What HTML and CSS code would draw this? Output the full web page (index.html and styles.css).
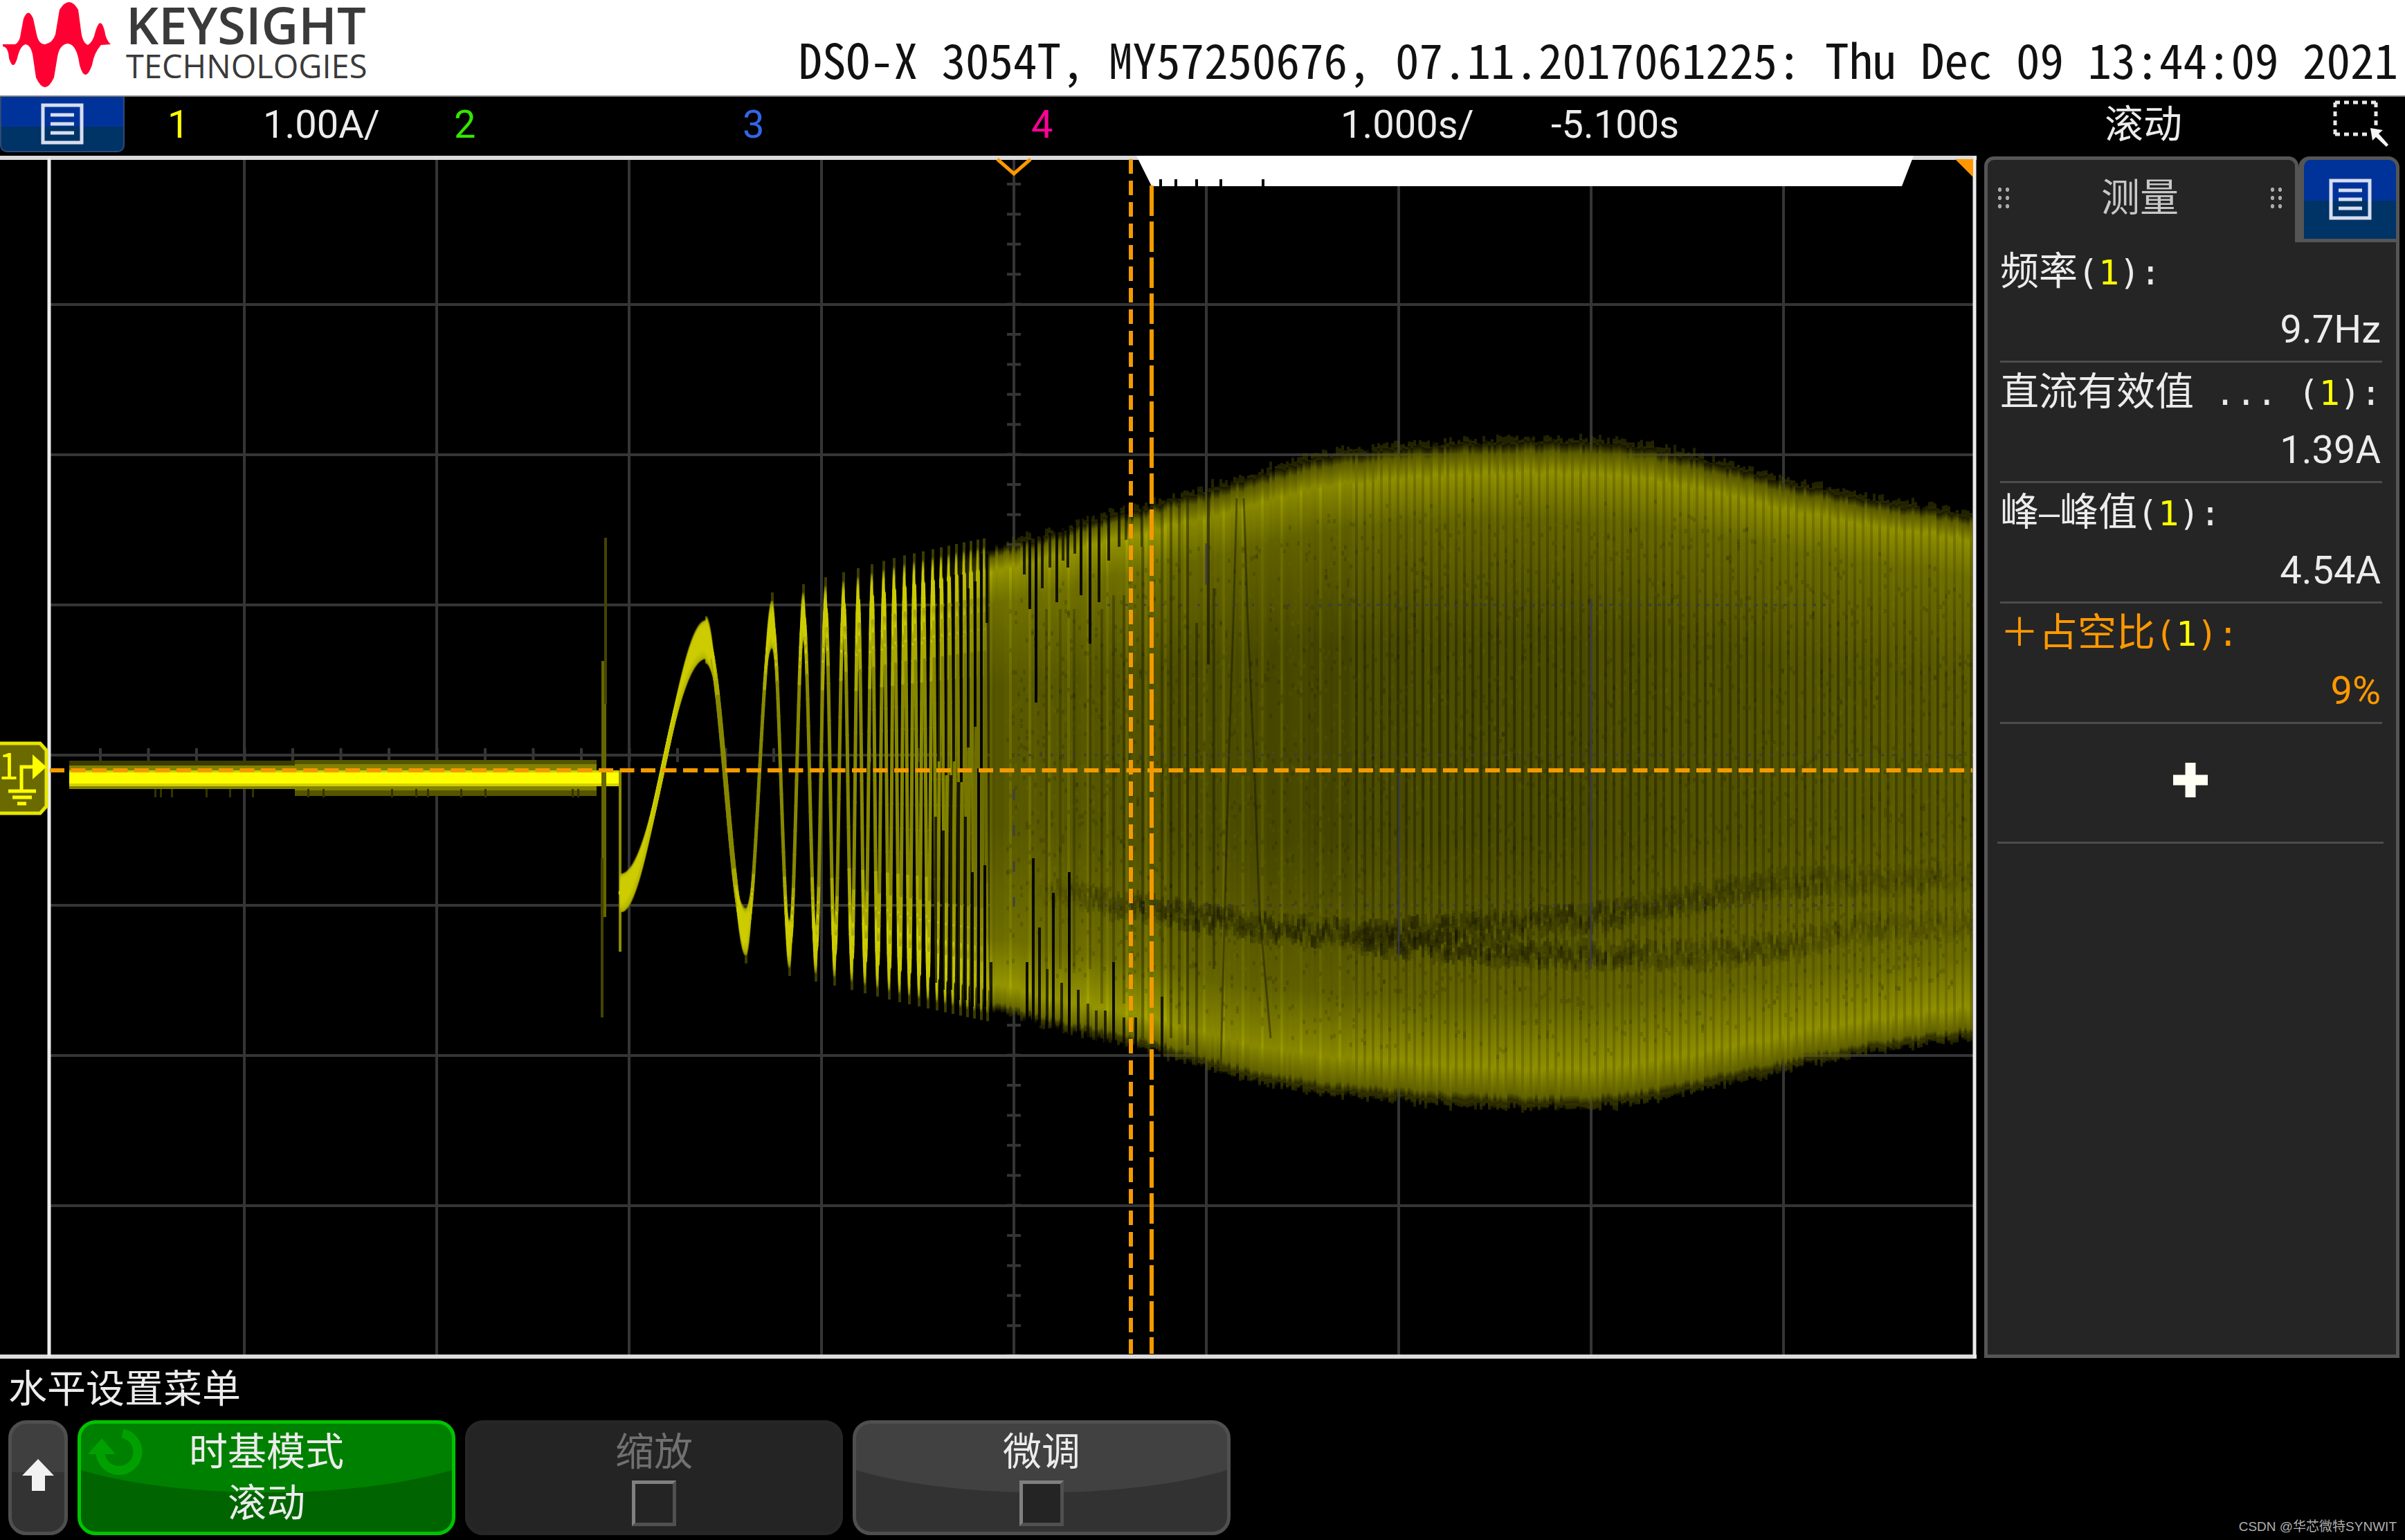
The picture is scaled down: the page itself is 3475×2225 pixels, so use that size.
FILE: index.html
```html
<!DOCTYPE html>
<html lang="zh-CN">
<head>
<meta charset="utf-8">
<title>DSO-X 3054T</title>
<link rel="stylesheet" href="styles.css">
</head>
<body>
<header class="masthead">
  <div class="brand">
    <svg class="brand-mark" viewBox="0 0 164 130" aria-hidden="true">
      <path fill="#ff0032" d="M4 64 L22 64 Q29 60 30 48 L34 27 Q41 10 48 27 L53 50 Q56 64 65 64 Q76 62 80 50 L86 14 Q100 -8 113 14 L117 44 Q119 62 127 65 Q135 60 138 45 Q145 22 151 44 Q153 58 160 64 L146 65 Q136 76 133 94 Q123 122 115 94 Q111 64 98 63 Q86 64 83 82 L78 112 Q65 140 52 112 L47 78 Q44 65 37 64 Q29 66 25 84 Q19 104 13 84 Q12 68 4 67 Z"/>
    </svg>
    <div class="brand-text">
      <span class="brand-name">KEYSIGHT</span>
      <span class="brand-sub">TECHNOLOGIES</span>
    </div>
  </div>
  <p class="device-info">DSO-X 3054T, MY57250676, 07.11.2017061225: Thu Dec 09 13:44:09 2021</p>
</header>

<section class="status">
  <button class="menu-button" type="button" aria-label="菜单">
    <svg class="menu-icon" viewBox="0 0 62 60"><rect x="3" y="3" width="56" height="54"/><path d="M14 17H48M14 30H48M14 43H48"/></svg>
  </button>
  <div class="channel ch1"><span class="channel-no">1</span><span class="reading">1.00A/</span></div>
  <div class="channel ch2">2</div>
  <div class="channel ch3">3</div>
  <div class="channel ch4">4</div>
  <div class="reading">1.000s/</div>
  <div class="reading">-5.100s</div>
  <div class="mode">滚动</div>
  <button class="select-button" type="button" aria-label="框选">
    <svg class="select-icon" viewBox="0 0 80 70"><path d="M3 3H64M3 49H52M3 3V49M62 3V38" fill="none" stroke="#e8e8e8" stroke-width="5" stroke-dasharray="7 6"/><path d="M54 40L72 43L66 48L80 64L77 67L62 53L57 58Z" fill="#f4f4f4"/></svg>
  </button>
</section>

<main class="workspace">
  <section class="scope" aria-label="波形">
    <svg class="layer" viewBox="0 224 2856 1740">
      <g stroke="#353535" stroke-width="4">
        <path d="M353 228V1960M631 228V1960M909 228V1960M1187 228V1960M1465 228V1960M1743 228V1960M2021 228V1960M2299 228V1960M2577 228V1960"/>
        <path d="M72 440H2852M72 657H2852M72 874H2852M72 1091H2852M72 1308H2852M72 1525H2852M72 1742H2852"/>
      </g>
      <g stroke="#353535" stroke-width="20">
        <path d="M1465 264V1960" stroke-dasharray="4 39.4"/>
        <path d="M143 1091H2850" stroke-dasharray="4 65.5"/>
      </g>
    </svg>
    <canvas class="layer" id="trace" width="2856" height="1740"></canvas>
    <svg class="layer" viewBox="0 224 2856 1740">
      <path d="M0 228H2856M0 1960H2856" stroke="#dcdcdc" stroke-width="6"/>
      <path d="M71 228V1960M2853 226V1962" stroke="#ececec" stroke-width="5"/>
      <path d="M1642 225H2765L2748 269H1664Z" fill="#fff"/>
      <path d="M1677 259V269M1699 259V269M1729 259V269M1764 259V269M1825 259V269" stroke="#000" stroke-width="4"/>
      <path d="M2825 230H2851V256Z" fill="#ff9800"/>
      <path d="M1441 230L1465 251L1489 230" fill="none" stroke="#ff9800" stroke-width="5"/>
      <g stroke="#f39a00" stroke-width="6">
        <path d="M1634 230V1956" stroke-dasharray="21 10"/>
        <path d="M1664 268V1956" stroke-dasharray="44 8"/>
        <path d="M72 1113H2850" stroke-dasharray="21 9.5"/>
      </g>
      <path d="M-6 1074H58L67 1084V1165L58 1175H-6Z" fill="#6a6a00" stroke="#e6e600" stroke-width="5"/>
      <text class="marker-no" x="-2" y="1126">1</text>
      <path d="M31 1142V1108H50M12 1143H52M18 1152H46M25 1161H38" fill="none" stroke="#ffff00" stroke-width="5"/>
      <path d="M47 1090L67 1108L47 1126Z" fill="#ffff00"/>
    </svg>
  </section>

  <aside class="measure">
    <div class="measure-head">
      <h2 class="measure-title"><i class="grip"></i><span>测量</span><i class="grip"></i></h2>
      <button class="measure-menu" type="button" aria-label="测量菜单">
        <svg class="menu-icon" viewBox="0 0 62 60"><rect x="3" y="3" width="56" height="54"/><path d="M14 17H48M14 30H48M14 43H48"/></svg>
      </button>
    </div>
    <dl class="measure-list">
      <div class="item"><dt>频率<span class="src">(<b>1</b>):</span></dt><dd>9.7Hz</dd></div>
      <div class="item"><dt>直流有效值<span class="src"> ... (<b>1</b>):</span></dt><dd>1.39A</dd></div>
      <div class="item"><dt>峰<span class="src">–</span>峰值<span class="src">(<b>1</b>):</span></dt><dd>4.54A</dd></div>
      <div class="item warn"><dt>＋占空比<span class="src">(<b>1</b>):</span></dt><dd>9%</dd></div>
    </dl>
    <button class="add" type="button" aria-label="添加测量">
      <svg class="add-icon" viewBox="0 0 50 50"><path d="M25 0V50M0 25H50" stroke="#fffff4" stroke-width="15"/></svg>
    </button>
  </aside>
</main>

<footer class="softmenu">
  <h1 class="softmenu-title">水平设置菜单</h1>
  <div class="softkeys">
    <button class="key back" type="button" aria-label="返回">
      <svg class="back-icon" viewBox="0 0 46 46"><path d="M23 0L46 24H33V46H14V24H0Z" fill="#f2f2f2"/></svg>
    </button>
    <button class="key active" type="button">
      <svg class="knob-icon" viewBox="0 0 80 66"><path d="M50 6A27 27 0 1 1 18 34" fill="none" stroke="#00a000" stroke-width="13"/><path d="M0 36L20 13L40 36Z" fill="#00a000"/></svg>
      <span>时基模式</span><span>滚动</span>
    </button>
    <label class="key disabled"><span>缩放</span><input type="checkbox" disabled></label>
    <label class="key"><span>微调</span><input type="checkbox"></label>
    <span class="credit">CSDN @华芯微特SYNWIT</span>
  </div>
</footer>
<script src="trace.js"></script>
</body>
</html>
```
FILE: styles.css
```css
* { box-sizing: border-box; }

body {
  margin: 0;
  background: #000;
  color: #ececec;
  font-family: Roboto, "Noto Sans CJK SC", sans-serif;
  font-size: 56px;
  line-height: 72px;
}

h1, h2, p, dl, dt, dd { margin: 0; font-size: inherit; font-weight: 400; }

button {
  margin: 0;
  padding: 0;
  border: 0;
  background: none;
  color: inherit;
  font: inherit;
}

svg { display: block; }

/* Header */
.masthead {
  display: flex;
  justify-content: space-between;
  height: 138px;
  background: #fff;
  color: #111;
}
.brand { display: flex; gap: 18px; }
.brand-mark { width: 164px; height: 130px; }
.brand-text {
  display: flex;
  flex-direction: column;
  color: #3a3a3a;
  font-family: "Open Sans", sans-serif;
}
.brand-name { font-size: 74px; font-weight: 600; line-height: 72px; }
.brand-sub { font-size: 47px; line-height: 46px; }
.device-info {
  align-self: flex-end;
  padding: 0 10px 18px 0;
  font-family: "Noto Sans Mono CJK SC", "Liberation Mono", monospace;
  font-size: 69px;
  line-height: 72px;
  white-space: pre;
}

/* Status bar */
.status {
  display: grid;
  grid-template-columns: 242fr 414fr 417fr 417fr 447fr 304fr 626fr 460fr 148fr;
  align-items: center;
  height: 86px;
  padding-bottom: 6px;
  border-top: 2px solid #777;
}
.status > * { min-width: 0; }
.menu-button {
  display: grid;
  place-items: center;
  align-self: start;
  width: 180px;
  height: 80px;
  border-radius: 0 0 10px 10px;
  border: 2px solid #2d4a78;
  border-top: 0;
  background: linear-gradient(#003399 55%, #003366 55%);
}
.menu-icon {
  width: 62px;
  height: 60px;
  fill: none;
  stroke: #d8def0;
  stroke-width: 5;
}
.channel { display: flex; }
.channel-no { flex: 0 0 138px; }
.ch1 { color: #ffff00; }
.ch2 { color: #33e600; }
.ch3 { color: #3366e6; }
.ch4 { color: #ff0099; }
.reading { color: #ececec; }
.mode { grid-column: 8; text-align: center; }
.select-button { grid-column: 9; justify-self: start; margin-left: 44px; }
.select-icon { width: 80px; height: 70px; }

/* Plot and measurements */
.workspace {
  display: grid;
  grid-template-columns: 2856fr 600fr;
  column-gap: 11px;
  padding-right: 8px;
}
.scope { display: grid; min-width: 0; }
.layer { grid-area: 1 / 1; display: block; width: 100%; height: auto; }
.marker-no { font-family: "Noto Sans CJK SC", sans-serif; font-size: 52px; fill: #ffff00; }

.measure {
  margin: 2px 0;
  border: 5px solid #555;
  border-top: 0;
  background: #252525;
  min-width: 0;
}
.measure-head { display: flex; margin-right: -5px; margin-left: -5px; background: #000; }
.measure-title {
  display: flex;
  flex: 1;
  align-items: center;
  justify-content: space-between;
  height: 124px;
  padding: 0 16px 10px 12px;
  border: 5px solid #555;
  border-bottom: 0;
  border-radius: 14px 14px 0 0;
  background: #252525;
  color: #c8c8c8;
}
.grip {
  width: 22px;
  height: 36px;
  background: radial-gradient(circle, #aaa 3px, transparent 3px) 0 0 / 11px 12px;
}
.measure-menu {
  display: grid;
  place-items: center;
  width: 146px;
  height: 124px;
  border: 5px solid #555;
  border-left-width: 8px;
  border-radius: 16px 16px 0 0;
  background: linear-gradient(#003399 52%, #003366 52%);
}
.measure-list { padding: 0 20px 0 18px; }
.item { border-bottom: 3px solid #4c4c4c; line-height: 84px; height: 174px; white-space: nowrap; }
.item dd { text-align: right; padding-right: 2px; }
.src { font-family: "DejaVu Sans Mono", monospace; font-size: 50px; line-height: 80px; }
.src b { color: #ffff00; font-weight: 400; }
.warn { color: #ff9800; }
.add {
  display: grid;
  place-items: center;
  width: calc(100% - 32px);
  height: 173px;
  margin: 0 18px 0 14px;
  padding-bottom: 8px;
  border-bottom: 3px solid #4c4c4c;
}
.add-icon { width: 50px; height: 50px; }

/* Soft keys */
.softmenu { padding: 5px 12px 7px; }
.softmenu-title { height: 83px; line-height: 76px; }
.softkeys { display: flex; gap: 14px; }
.key {
  position: relative;
  display: flex;
  flex-direction: column;
  align-items: center;
  flex: 0 1 546px;
  height: 166px;
  padding-top: 4px;
  border: 5px solid #4f4f4f;
  border-radius: 26px;
  background: radial-gradient(ellipse 68% 64% at 50% 0, #414141 99%, #323232 100%);
}
.key.back { flex: 0 0 86px; justify-content: center; padding: 0 0 8px; background: linear-gradient(#3f3f3f 45%, #333 45%); }
.back-icon { width: 46px; height: 46px; }
.key.active {
  border-color: #00c400;
  background: radial-gradient(ellipse 68% 64% at 50% 0, #008000 99%, #006400 100%);
}
.knob-icon { position: absolute; top: 8px; left: 10px; width: 80px; height: 66px; }
.key.disabled { border-color: #262626; background: #242424; color: #707070; }
.key input {
  appearance: none;
  width: 64px;
  height: 66px;
  margin: 4px 0 0;
  border: 5px solid;
  border-color: #808080 #505050 #505050 #808080;
  background: #242424;
}
.key span { line-height: 74px; }
.credit {
  align-self: flex-end;
  margin-left: auto;
  color: #b0b0b0;
  font-family: "Liberation Sans", "Noto Sans CJK SC", sans-serif;
  font-size: 19px;
  line-height: 24px;
}
```
FILE: trace.js
```javascript
// Channel 1 trace: flat line, start-up spike, then a chirp that fills its envelope.
const ctx = document.getElementById('trace').getContext('2d');
ctx.translate(0, -224);

let seed = 7;
function rnd() {
  seed = (seed * 1664525 + 1013904223) % 4294967296;
  return seed / 4294967296;
}

function curve(points) {
  return x => {
    if (x <= points[0][0]) return points[0][1];
    for (let i = 1; i < points.length; i++) {
      const [x0, y0] = points[i - 1], [x1, y1] = points[i];
      if (x <= x1) return y0 + (y1 - y0) * (x - x0) / (x1 - x0);
    }
    return points[points.length - 1][1];
  };
}

const upper = curve([[1020, 900], [1116, 878], [1161, 866], [1193, 856], [1300, 826], [1400, 804], [1465, 792], [1550, 766],
  [1634, 744], [1740, 714], [1800, 696], [1900, 666], [2000, 653], [2100, 646], [2200, 642], [2300, 644], [2380, 652],
  [2450, 667], [2520, 685], [2600, 706], [2700, 727], [2850, 750]]);
const lower = curve([[1078, 1370], [1141, 1388], [1206, 1402], [1300, 1426], [1400, 1448], [1465, 1461], [1550, 1486],
  [1634, 1503], [1740, 1535], [1800, 1552], [1900, 1572], [2000, 1582], [2100, 1590], [2200, 1594], [2300, 1594],
  [2400, 1581], [2500, 1557], [2600, 1534], [2700, 1513], [2850, 1492]]);

// Quiet part
ctx.fillStyle = '#3c3c00';
ctx.fillRect(100, 1099, 326, 41);
ctx.fillStyle = '#555500';
ctx.fillRect(426, 1098, 436, 52);
ctx.fillStyle = '#828200';
ctx.fillRect(100, 1106, 326, 34);
ctx.fillRect(426, 1104, 436, 38);
ctx.fillStyle = '#d0d000';
ctx.fillRect(100, 1113, 797, 23);
ctx.fillStyle = '#ffff00';
ctx.fillRect(100, 1116, 797, 16);
ctx.fillStyle = '#333300';
for (const x of [223, 231, 247, 297, 331, 364, 444, 466, 565, 600, 617, 665, 700, 826, 834]) ctx.fillRect(x, 1140, 3, 12);
ctx.fillStyle = '#666600';
ctx.fillRect(869, 955, 7, 370);
ctx.fillStyle = '#444400';
ctx.fillRect(873, 777, 4, 240);
ctx.fillRect(868, 1240, 4, 230);
ctx.fillStyle = '#8c8c00';
ctx.fillRect(894, 1113, 4, 262);

// First cycles, from turning point to turning point
const peaks = [1020, 1116, 1161, 1193, 1219, 1240, 1260, 1277, 1292, 1307, 1321, 1334, 1348, 1360, 1371, 1382, 1393, 1403, 1413, 1422];
const lows = [1078, 1141, 1179, 1206, 1231, 1250, 1268, 1285, 1300, 1314, 1328, 1341, 1354, 1366, 1377, 1388, 1398, 1408, 1418, 1427];
const turns = [[897, 1290]];
peaks.forEach((x, i) => {
  turns.push([x, upper(x) + 24]);
  turns.push([lows[i], lower(lows[i]) - 24]);
});
ctx.lineCap = 'round';
for (let i = 1; i < turns.length; i++) {
  const [x0, y0] = turns[i - 1], [x1, y1] = turns[i];
  const first = i === 1;
  let px = x0, py = y0;
  const n = Math.max(24, Math.round((x1 - x0) * 2));
  for (let k = 1; k <= n; k++) {
    const u = k / n;
    const x = x0 + (x1 - x0) * u;
    const y = y0 + (y1 - y0) * (1 - Math.cos(Math.PI * u)) / 2;
    const flat = Math.abs(Math.cos(Math.PI * u));
    ctx.strokeStyle = first || flat > 0.85 ? '#cccc00' : flat > 0.6 ? '#a8a800' : '#888800';
    ctx.lineWidth = i < 3 ? 7 : 5;
    ctx.beginPath();
    ctx.moveTo(px, py);
    ctx.lineTo(x, y);
    ctx.stroke();
    if (flat > 0.7 || first) {
      const t = first ? 14 + 42 * flat * flat : 190 * (flat - 0.7) + 12;
      const g = ctx.createLinearGradient(0, y - t / 2, 0, y + t / 2);
      g.addColorStop(0, 'rgba(204,204,0,.1)');
      g.addColorStop(0.3, '#cccc00');
      g.addColorStop(0.75, '#cccc00');
      g.addColorStop(1, 'rgba(180,180,0,.2)');
      ctx.fillStyle = g;
      ctx.fillRect(x - 2, y - t / 2, first ? 4 : 3, t);
    }
    px = x;
    py = y;
  }
  // faint tip beyond the turning point
  if (i > 1) {
    ctx.fillStyle = 'rgba(130,130,0,.45)';
    ctx.fillRect(x1 - 2, i % 2 ? y1 - 46 : y1 + 16, 4, 30);
  }
}

// Dense part, one scope column at a time
const mid = curve([[1330, 60], [1465, 92], [1620, 86], [1900, 70], [2250, 70], [2600, 80], [2850, 86]]);
const smudgeA = curve([[1500, 1285], [1663, 1314], [1846, 1343], [1962, 1350], [2100, 1342], [2296, 1327], [2457, 1296], [2574, 1276], [2850, 1268]]);
const smudgeB = curve([[1900, 1350], [2055, 1368], [2296, 1381], [2457, 1380], [2580, 1368], [2673, 1343], [2850, 1335]]);
const strength = curve([[1480, 0], [1600, 0.2], [1700, 0.3], [2100, 0.3], [2350, 0.22], [2600, 0.15], [2850, 0.08]]);
for (let x = 1330; x < 2850; x += 4) {
  const w = Math.min(4, 2850 - x);
  const t = upper(x) + rnd() * 8 - 4, b = lower(x) + rnd() * 8 - 4;
  const cover = x < 1430 ? Math.pow((x - 1330) / 110, 2) * 0.8 : 1;
  const stripe = x > 1950 ? ((x / 4) % 3 < 1 ? -18 : 6) : ((x / 4) % 7 < 1 ? 14 : -2);
  const m = mid(x) + stripe + rnd() * 6 - 3;
  const e = x < 1700 ? 150 : 138;
  const c = v => 'rgba(' + Math.round(v) + ',' + Math.round(v) + ',0,' + cover + ')';
  const g = ctx.createLinearGradient(0, t - 8, 0, b + 8);
  g.addColorStop(0, 'rgba(80,80,0,0)');
  g.addColorStop(0.02, c(e * 0.65));
  g.addColorStop(0.05, c(e + stripe));
  g.addColorStop(0.12, c((e + m * 2) / 3 + 4));
  g.addColorStop(0.3, c(m));
  g.addColorStop(0.6, c(m));
  g.addColorStop(0.84, c((e + m * 2) / 3 + 2));
  g.addColorStop(0.94, c(e + stripe));
  g.addColorStop(0.98, c(e * 0.7));
  g.addColorStop(1, 'rgba(80,80,0,0)');
  ctx.fillStyle = g;
  ctx.fillRect(x, t - 8, w, b - t + 16);
  if (x > 1450) {
    ctx.fillStyle = 'rgba(75,75,0,.45)';
    const spike = rnd() * 12;
    ctx.fillRect(x, t - 4 - spike, w, spike);
    ctx.fillRect(x, b, w, rnd() * 12);
    for (let k = 0; k < 14; k++) {
      ctx.fillStyle = rnd() < 0.5 ? 'rgba(20,20,0,.16)' : 'rgba(130,130,0,.1)';
      ctx.fillRect(x, t + 70 + rnd() * (b - t - 140), w, 6);
    }
    for (const [line, from] of [[smudgeA, 1480], [smudgeB, 1960]]) {
      if (x < from) continue;
      for (let k = 0; k < 5; k++) {
        ctx.fillStyle = 'rgba(15,15,0,' + strength(x) * rnd() + ')';
        ctx.fillRect(x, line(x) - 26 + rnd() * 34, w, 18);
      }
    }
  }
}

// Gaps between cycles that the beat leaves open: x, from, to, opacity
const gaps = [
  [1354, 850, 1100, 0.7], [1365, 840, 1120, 0.8], [1376, 830, 1100, 0.8], [1350, 1180, 1420, 0.7], [1361, 1200, 1430, 0.8], [1372, 1120, 1430, 0.8],
  [1387, 830, 1130, 0.9], [1397, 850, 1080, 0.8], [1407, 840, 1050, 0.9], [1416, 800, 1110, 0.95], [1424, 800, 900, 0.8],
  [1383, 1130, 1445, 0.8], [1393, 1180, 1445, 0.8], [1403, 1260, 1455, 0.9], [1412, 1110, 1450, 0.95], [1421, 1250, 1455, 0.95], [1430, 1390, 1460, 0.8],
  [1478, 782, 830, 0.8], [1486, 780, 880, 0.9], [1495, 775, 1015, 0.95], [1504, 770, 850, 0.8], [1515, 770, 820, 0.7], [1525, 765, 870, 0.85],
  [1534, 765, 810, 0.7], [1541, 760, 820, 0.8], [1551, 755, 800, 0.7],
  [1560, 750, 860, 0.9], [1573, 745, 930, 0.9], [1586, 740, 870, 0.85], [1600, 740, 810, 0.8], [1615, 735, 790, 0.7], [1625, 732, 780, 0.5], [1648, 728, 790, 0.5],
  [1482, 1390, 1475, 0.9], [1491, 1240, 1480, 0.9], [1500, 1340, 1482, 0.85], [1511, 1400, 1485, 0.7], [1520, 1290, 1490, 0.9], [1532, 1420, 1495, 0.7],
  [1543, 1260, 1498, 0.95], [1556, 1430, 1502, 0.8], [1570, 1450, 1505, 0.6], [1582, 1460, 1508, 0.6], [1595, 1460, 1510, 0.7], [1607, 1390, 1515, 0.9],
  [1622, 1470, 1518, 0.7], [1639, 1470, 1520, 0.8], [1677, 1440, 1530, 0.8],
  [1510, 880, 1400, 0.2], [1530, 880, 1400, 0.2], [1550, 880, 1400, 0.2], [1573, 930, 1400, 0.2], [1590, 880, 1450, 0.25], [1607, 860, 1400, 0.25], [1622, 860, 1450, 0.25],
  [1649, 790, 1500, 0.3], [1677, 730, 1440, 0.25], [1690, 725, 1500, 0.35], [1702, 730, 1480, 0.25], [1714, 720, 1510, 0.35], [1727, 900, 1540, 0.35], [1744, 710, 960, 0.5], [1752, 850, 1400, 0.3]
];
ctx.lineCap = 'butt';
for (const [x, y0, y1, a] of gaps) {
  ctx.fillStyle = 'rgba(0,0,0,' + a + ')';
  ctx.fillRect(x, y0, 4, y1 - y0);
}
ctx.strokeStyle = 'rgba(20,20,0,.45)';
ctx.lineWidth = 3;
for (const path of [
  [[1787, 720], [1782, 900], [1776, 1080], [1770, 1300], [1764, 1540]],
  [[1797, 720], [1803, 900], [1812, 1100], [1820, 1320], [1836, 1500]]
]) {
  ctx.beginPath();
  path.forEach(([x, y]) => ctx.lineTo(x, y));
  ctx.stroke();
}

// Graticule showing through the trace
ctx.strokeStyle = 'rgba(58,58,80,.8)';
ctx.lineWidth = 3;
const faint = (x0, y0, x1, y1, dash) => {
  ctx.setLineDash(dash);
  ctx.beginPath();
  ctx.moveTo(x0, y0);
  ctx.lineTo(x1, y1);
  ctx.stroke();
};
faint(1465, 1140, 1465, 1310, [16, 36]);
faint(1743, 785, 1743, 845, []);
faint(2021, 1118, 2021, 1382, []);
faint(2299, 865, 2299, 1400, []);
faint(1600, 874, 1900, 874, [4, 22]);
faint(1905, 874, 2640, 874, [5, 9]);
faint(1470, 1091, 2840, 1091, [4, 12]);
faint(1560, 1308, 2680, 1308, [4, 14]);
```
